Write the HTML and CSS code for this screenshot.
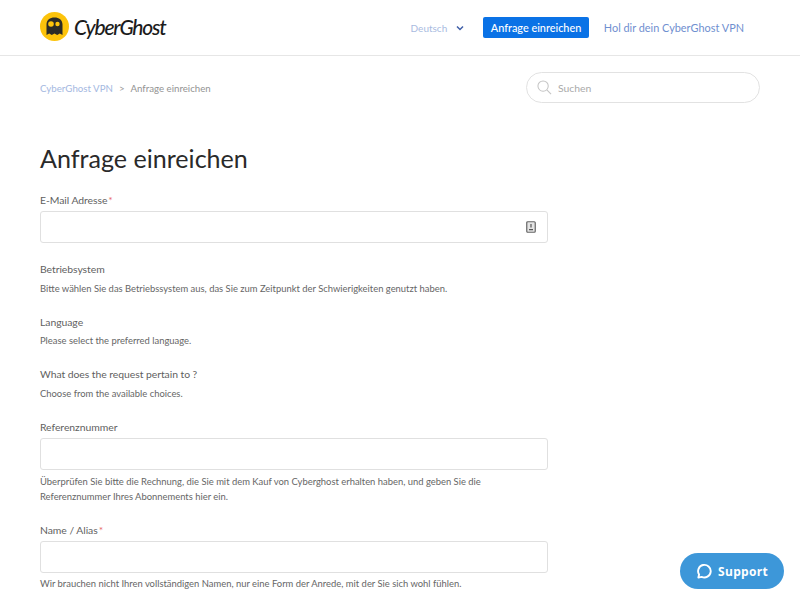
FILE: index.html
```html
<!DOCTYPE html>
<html lang="de">
<head>
<meta charset="utf-8">
<title>Anfrage einreichen</title>
<link rel="stylesheet" href="styles.css">
</head>
<body>
<header class="header">
  <a class="logo">
    <svg class="logo-icon" width="29" height="29" viewBox="0 0 29 29"><circle cx="14.500" cy="14.500" r="14.500" fill="#fcc30b"/><path d="M6.500 23V12.500C6.500 8 10 5.500 14.500 5.500s8 2.500 8 7V23l-2.700-1.400-2.600 1.400-2.700-1.400-2.700 1.400-2.600-1.400z" fill="#2b2b26"/><circle cx="11" cy="12" r="2.800" fill="#fcc30b"/><circle cx="17.500" cy="12" r="2.200" fill="#fcc30b"/></svg>
    <span class="logo-text">CyberGhost</span>
  </a>
  <nav class="nav">
    <span class="lang">Deutsch<svg class="chev" width="8" height="6" viewBox="0 0 8 6"><path d="M1 1.500l3 3 3-3" fill="none" stroke="#3f5fa8" stroke-width="1.500"/></svg></span>
    <a class="btn">Anfrage einreichen</a>
    <a class="nav-link">Hol dir dein CyberGhost VPN</a>
  </nav>
</header>
<div class="sub">
  <div class="crumbs"><a class="crumb-link">CyberGhost VPN</a><span class="crumb-sep">&gt;</span><span>Anfrage einreichen</span></div>
  <div class="search">
    <svg width="15" height="15" viewBox="0 0 16 16"><circle cx="6.500" cy="6.500" r="5.500" fill="none" stroke="#c4c4c4" stroke-width="1.100"/><path d="M10.500 10.500l4.500 4.500" stroke="#c4c4c4" stroke-width="1.100"/></svg>
    <span>Suchen</span>
  </div>
</div>
<main class="main">
  <h1 class="title">Anfrage einreichen</h1>
  <div class="field field-first">
    <label class="label">E-Mail Adresse<span class="req">*</span></label>
    <div class="input input-icon">
      <svg width="10" height="12" viewBox="0 0 10 12"><rect x=".75" y=".75" width="8.500" height="10.500" rx="1" fill="#e4e4e4" stroke="#666" stroke-width="1.200"/><path d="M5 3v3.500M3 8.700h4" stroke="#555" stroke-width="1.200"/></svg>
    </div>
  </div>
  <div class="field">
    <label class="label">Betriebsystem</label>
    <p class="hint">Bitte wählen Sie das Betriebssystem aus, das Sie zum Zeitpunkt der Schwierigkeiten genutzt haben.</p>
  </div>
  <div class="field">
    <label class="label">Language</label>
    <p class="hint">Please select the preferred language.</p>
  </div>
  <div class="field">
    <label class="label">What does the request pertain to ?</label>
    <p class="hint">Choose from the available choices.</p>
  </div>
  <div class="field">
    <label class="label">Referenznummer</label>
    <div class="input"></div>
    <p class="hint">Überprüfen Sie bitte die Rechnung, die Sie mit dem Kauf von Cyberghost erhalten haben, und geben Sie die Referenznummer Ihres Abonnements hier ein.</p>
  </div>
  <div class="field">
    <label class="label">Name / Alias<span class="req">*</span></label>
    <div class="input"></div>
    <p class="hint">Wir brauchen nicht Ihren vollständigen Namen, nur eine Form der Anrede, mit der Sie sich wohl fühlen.</p>
  </div>
</main>
<a class="support">
  <svg width="16" height="16" viewBox="0 0 17 17"><path d="M2.500 15.500l.8-3.200A6.700 6.700 0 1 1 6 14.700z" fill="none" stroke="#fff" stroke-width="2" stroke-linejoin="round"/></svg>
  <span>Support</span>
</a>
</body>
</html>
```
FILE: styles.css
```css
* { box-sizing: border-box; }
body {
  margin: 0;
  height: 600px;
  overflow: hidden;
  background: #fff;
  color: #555;
  font-family: "Lato", "Open Sans", sans-serif;
  font-size: 9.700px;
}
.header {
  height: 56px;
  border-bottom: 1px solid #e6e6e6;
  display: flex;
  align-items: center;
  justify-content: space-between;
  padding: 0 56px 0 40px;
}
.logo { display: flex; align-items: center; gap: 5px; margin-bottom: 2px; }
.logo-icon { display: block; }
.logo-text {
  font-family: "Lato", sans-serif;
  font-style: italic;
  font-size: 21px;
  font-weight: 500;
  letter-spacing: -1.200px;
  color: #1c1c1c;
}
.nav { display: flex; align-items: center; font-size: 10.900px; }
.lang { color: #a9bbdf; font-size: 10px; display: flex; align-items: center; gap: 9px; margin-right: 19px; }
.btn {
  background: #0a72e6;
  color: #fff;
  border-radius: 2px;
  height: 21px;
  line-height: 21px;
  padding: 0 7.500px;
  font-weight: 500;
}
.nav-link { color: #6f8fd0; margin-left: 15px; }
.sub {
  display: flex;
  justify-content: space-between;
  align-items: center;
  padding: 16px 40px 0;
}
.crumbs { color: #939393; display: flex; gap: 6px; padding-top: 1px; }
.crumb-link { color: #a4b8df; }
.crumb-sep { color: #999; }
.search {
  width: 234px;
  height: 31px;
  border: 1px solid #e2e2e2;
  border-radius: 16px;
  display: flex;
  align-items: center;
  gap: 6px;
  padding-left: 10px;
  font-size: 10.400px;
  color: #aaa;
}
.main { padding: 0 40px; width: 588px; }
.title {
  margin: 36px 0 0;
  font-size: 25.100px;
  line-height: 38px;
  font-weight: 400;
  color: #2a2a2a;
}
.field { margin-top: 19px; }
.field-first { margin-top: 16px; }
.label { display: block; line-height: 15px; font-size: 10.400px; letter-spacing: -.05px; color: #5f5f5f; }
.req { color: #e86a6a; margin-left: 1px; }
.input {
  margin-top: 3px;
  height: 32px;
  border: 1px solid #e0e0e0;
  border-radius: 3px;
  background: #fff;
}
.input-icon { display: flex; align-items: center; justify-content: flex-end; padding-right: 11px; }
.hint { margin: 3.700px 0 0; font-size: 9.420px; line-height: 15px; color: #666; }
.support {
  position: absolute;
  left: 680px;
  top: 553px;
  width: 104px;
  height: 36px;
  border-radius: 18px;
  background: #3d97d9;
  color: #fff;
  font-family: "Open Sans", sans-serif;
  font-weight: 700;
  font-size: 12px;
  letter-spacing: .3px;
  display: flex;
  align-items: center;
  justify-content: center;
  gap: 6px;
}
```
